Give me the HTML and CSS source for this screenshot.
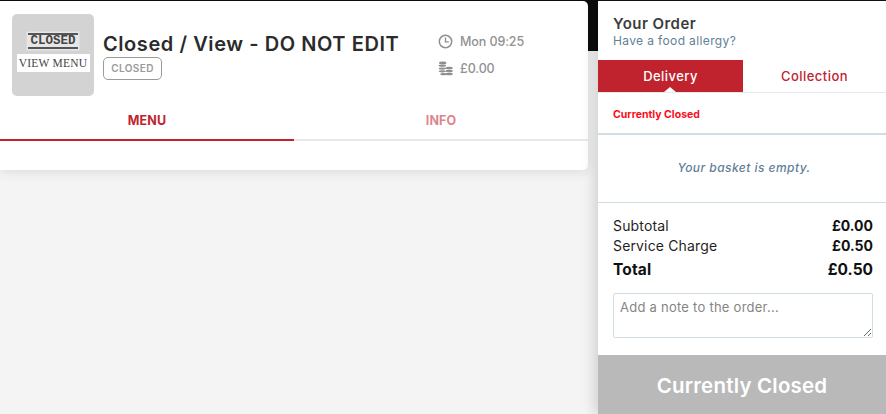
FILE: index.html
```html
<!DOCTYPE html>
<html lang="en">
<head>
<meta charset="utf-8">
<title>Closed / View - DO NOT EDIT</title>
<link rel="stylesheet" href="styles.css">
</head>
<body>
<div class="page">
  <main class="main">
    <section class="card">
      <div class="head">
        <div class="logo">
          <span class="logo-closed">CLOSED</span>
          <span class="logo-view">VIEW MENU</span>
        </div>
        <div class="title-block">
          <h1 class="title">Closed / View - DO NOT EDIT</h1>
          <span class="badge">CLOSED</span>
        </div>
        <div class="meta">
          <div class="meta-row">
            <svg class="meta-icon" viewBox="0 0 16 16"><circle cx="8" cy="8" r="6.6" fill="none" stroke="#8f8f8f" stroke-width="1.6"/><path d="M8 3.8v4.6h3.6" fill="none" stroke="#8f8f8f" stroke-width="1.5"/></svg>
            <span>Mon 09:25</span>
          </div>
          <div class="meta-row">
            <svg class="meta-icon" viewBox="0 0 16 16" fill="#8f8f8f"><ellipse cx="5" cy="2" rx="4" ry="1.4"/><ellipse cx="4.6" cy="5" rx="4" ry="1.2"/><ellipse cx="4.6" cy="8" rx="4" ry="1.2"/><ellipse cx="4.6" cy="11" rx="3.8" ry="1.2"/><ellipse cx="6" cy="14" rx="3.6" ry="1.2"/><ellipse cx="12" cy="7.4" rx="3.8" ry="1.4"/><ellipse cx="12" cy="10.6" rx="3.8" ry="1.3"/><ellipse cx="12" cy="13.8" rx="3.8" ry="1.3"/></svg>
            <span>£0.00</span>
          </div>
        </div>
      </div>
      <nav class="tabs">
        <a class="tab tab-active">MENU</a>
        <a class="tab tab-dim">INFO</a>
      </nav>
    </section>
  </main>
  <aside class="order">
    <div class="order-head">
      <h2 class="order-title">Your Order</h2>
      <a class="allergy">Have a food allergy?</a>
    </div>
    <div class="mode">
      <div class="mode-btn mode-on">Delivery</div>
      <div class="mode-btn">Collection</div>
    </div>
    <div class="status">Currently Closed</div>
    <div class="empty">Your basket is empty.</div>
    <div class="totals">
      <div class="line"><span>Subtotal</span><b>£0.00</b></div>
      <div class="line"><span>Service Charge</span><b>£0.50</b></div>
      <div class="line line-total"><span>Total</span><b>£0.50</b></div>
    </div>
    <div class="note-wrap">
      <textarea class="note" placeholder="Add a note to the order..."></textarea>
    </div>
    <div class="cta">Currently Closed</div>
  </aside>
</div>
</body>
</html>
```
FILE: styles.css
```css
* { box-sizing: border-box; }
html, body { margin: 0; height: 100%; }
body {
  font-family: "Inter", "Liberation Sans", sans-serif;
  background: #f4f4f4;
  overflow: hidden;
}
.page {
  display: flex;
  width: 886px;
  height: 414px;
}
.main {
  width: 598px;
  flex: none;
  padding: 1px 10px 0 0;
  background: linear-gradient(#0d0d0d, #0d0d0d) no-repeat top left / 100% 51px;
}
.card {
  height: 169px;
  background: #fff;
  border-radius: 0 5px 5px 0;
  box-shadow: 0 2px 12px rgba(0, 0, 0, .1);
  display: flex;
  flex-direction: column;
}
.head {
  display: flex;
  align-items: flex-start;
  padding: 13px 0 0 12px;
  height: 104px;
}
.logo {
  width: 82px;
  height: 82px;
  background: #d3d3d3;
  border-radius: 5px;
  display: flex;
  flex-direction: column;
  align-items: center;
  color: #444;
  padding-top: 19px;
  gap: 5px;
}
.logo-closed {
  font-family: "Liberation Mono", monospace;
  font-size: 12.5px;
  font-weight: 700;
  line-height: 12px;
  width: 50px;
  height: 16px;
  text-align: center;
  border-top: 2px solid #555;
  border-bottom: 2px solid #555;
  box-shadow: 0 0 0 1.5px #e6e6e6;
  background: #e6e6e6;
}
.logo-view {
  font-family: "Liberation Serif", serif;
  width: 73px;
  height: 18px;
  background: #fff;
  font-size: 11.5px;
  line-height: 18px;
  text-align: center;
  letter-spacing: .2px;
}
.title-block { margin: 18px 0 0 9px; width: 323px; }
.title {
  margin: 0;
  font-size: 20px;
  line-height: 25px;
  font-weight: 600;
  color: #2b2b2b;
  letter-spacing: .57px;
  white-space: nowrap;
}
.badge {
  display: block;
  width: 59px;
  height: 23px;
  line-height: 21px;
  border: 1px solid #9a9a9a;
  border-radius: 5px;
  text-align: center;
  font-size: 10px;
  font-weight: 600;
  color: #9a9a9a;
  letter-spacing: .4px;
}
.meta { margin: 19px 0 0 12px; }
.meta-row {
  display: flex;
  align-items: center;
  gap: 7px;
  height: 16px;
  margin-bottom: 11px;
  font-size: 12.5px;
  font-weight: 500;
  color: #929292;
  white-space: nowrap;
  letter-spacing: -.1px;
}
.meta-icon { width: 15px; height: 15px; flex: none; }
.tabs {
  display: flex;
  height: 36px;
  border-bottom: 2px solid #e9e9e9;
}
.tab {
  flex: 1;
  text-align: center;
  font-size: 12.5px;
  font-weight: 700;
  line-height: 32px;
  color: #c1232e;
  letter-spacing: .1px;
}
.tab-active {
  flex: none;
  width: 294px;
  border-bottom: 2px solid #c1232e;
  height: 36px;
}
.tab-dim { opacity: .55; }
.order {
  width: 288px;
  flex: none;
  background: #fff;
  display: flex;
  flex-direction: column;
  border-top: 1px solid #111;
  box-shadow: -2px 0 14px rgba(0, 0, 0, .18);
  position: relative;
}
.order-head { padding: 13px 15px 0; height: 59px; }
.order-title {
  margin: 0;
  font-size: 15px;
  line-height: 19px;
  font-weight: 600;
  color: #3c3c3c;
  letter-spacing: .45px;
}
.allergy {
  display: block;
  font-size: 12px;
  line-height: 16px;
  color: #5f8097;
  letter-spacing: .37px;
}
.mode {
  display: flex;
  height: 33px;
  border-bottom: 1px solid #e3ebf0;
}
.mode-btn {
  flex: 1;
  text-align: center;
  font-size: 13px;
  font-weight: 500;
  line-height: 33px;
  color: #c1232e;
  position: relative;
  letter-spacing: .45px;
}
.mode-on {
  flex: none;
  width: 145px;
  height: 32px;
  background: #c1232e;
  color: #fff;
}
.mode-on::after {
  content: "";
  position: absolute;
  left: 66px;
  bottom: 0;
  border-left: 6px solid transparent;
  border-right: 6px solid transparent;
  border-bottom: 5px solid #fff;
}
.status {
  height: 42px;
  padding: 16px 15px 0;
  font-size: 10.5px;
  font-weight: 700;
  line-height: 12px;
  color: #fb0d1b;
  border-bottom: 2px solid #cfdde4;
}
.empty {
  height: 68px;
  padding: 25px 0 0 4px;
  text-align: center;
  font-size: 12px;
  font-style: italic;
  font-weight: 500;
  line-height: 16px;
  color: #5f8097;
  border-bottom: 1px solid #cfdde4;
  letter-spacing: .45px;
}
.totals { padding: 13px 13px 0 15px; height: 90px; }
.line {
  display: flex;
  justify-content: space-between;
  font-size: 14px;
  line-height: 20px;
  color: #1f1f1f;
}
.line span { letter-spacing: .15px; }
.line b { font-weight: 700; color: #111; }
.line-total {
  margin-top: 4px;
  font-size: 15.5px;
  font-weight: 700;
  color: #111;
}
.note-wrap { padding: 0 13px 0 15px; height: 62px; }
.note {
  display: block;
  width: 100%;
  height: 45px;
  padding: 5px 6px;
  border: 1px solid #cfdde4;
  border-radius: 2px;
  outline: 0;
  font-family: inherit;
  font-size: 13px;
  line-height: 16px;
  color: #333;
  letter-spacing: .25px;
}
.note::placeholder { color: #858585; opacity: 1; }
.cta {
  height: 59px;
  padding-top: 3px;
  background: #b9b9b9;
  color: #fff;
  text-align: center;
  font-size: 20.5px;
  font-weight: 600;
  line-height: 56px;
  letter-spacing: .2px;
}
```
